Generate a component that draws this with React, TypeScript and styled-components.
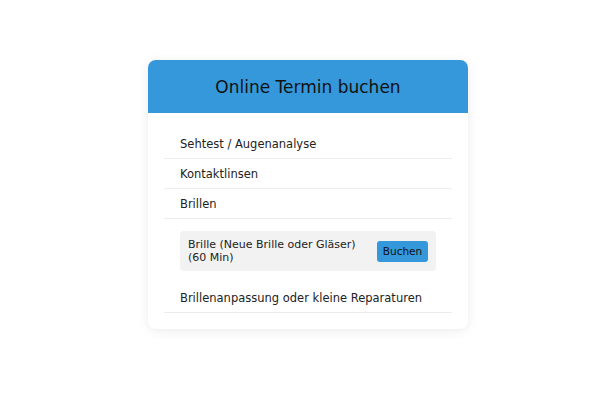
import React, { useState } from "react";
import styled, { createGlobalStyle } from "styled-components";

const GlobalStyle = createGlobalStyle`
  html, body {
    margin: 0;
    padding: 0;
    background: #ffffff;
  }
  body {
    font-family: "DejaVu Sans", Verdana, sans-serif;
    color: #222;
  }
`;

const Page = styled.div`
  width: 600px;
  height: 400px;
  display: flex;
  justify-content: center;
  align-items: flex-start;
  padding: 60px 0 0 16px;
  box-sizing: border-box;
`;

const Card = styled.div`
  width: 320px;
  background: #fff;
  border-radius: 8px;
  box-shadow: 0 2px 12px rgba(0, 0, 0, 0.08);
  overflow: hidden;
`;

const Header = styled.div`
  height: 53px;
  background: #3498db;
  display: flex;
  align-items: center;
  justify-content: center;
  font-size: 17px;
  color: #111;
`;

const Body = styled.div`
  padding: 16px;
`;

const Row = styled.div`
  height: 29px;
  display: flex;
  align-items: center;
  padding: 0 16px;
  border-bottom: 1px solid #ececec;
  font-size: 11.5px;
  color: #222;
  cursor: pointer;
`;

const Panel = styled.div`
  padding: 12px 16px;
`;

const Service = styled.div`
  background: #f2f2f2;
  border-radius: 4px;
  height: 40px;
  padding: 0 8px;
  box-sizing: border-box;
  display: flex;
  align-items: center;
  justify-content: space-between;
`;

const ServiceText = styled.div`
  font-size: 11px;
  line-height: 13px;
  color: #222;
`;

const BookButton = styled.button`
  background: #3498db;
  border: none;
  border-radius: 3px;
  height: 21px;
  width: 51px;
  padding: 0;
  font-family: inherit;
  font-size: 10.5px;
  color: #111;
  cursor: pointer;
`;

const categories = [
  "Sehtest / Augenanalyse",
  "Kontaktlinsen",
  "Brillen",
  "Brillenanpassung oder kleine Reparaturen",
];

export default function App() {
  const [open, setOpen] = useState("Brillen");

  return (
    <>
      <GlobalStyle />
      <Page>
        <Card>
          <Header>Online Termin buchen</Header>
          <Body>
            {categories.map((c) => (
              <React.Fragment key={c}>
                <Row onClick={() => setOpen(open === c ? "" : c)}>{c}</Row>
                {open === c && c === "Brillen" && (
                  <Panel>
                    <Service>
                      <ServiceText>
                        Brille (Neue Brille oder Gläser)
                        <br />
                        (60 Min)
                      </ServiceText>
                      <BookButton>Buchen</BookButton>
                    </Service>
                  </Panel>
                )}
              </React.Fragment>
            ))}
          </Body>
        </Card>
      </Page>
    </>
  );
}
